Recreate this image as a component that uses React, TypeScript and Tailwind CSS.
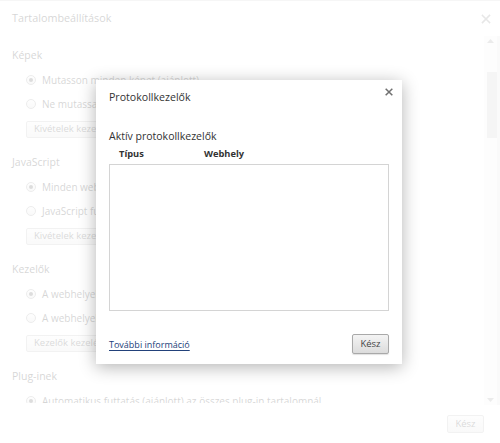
import React from "react";

const font = { fontFamily: '"Open Sans", "Noto Sans", sans-serif' };

function Radio({ checked }: { checked?: boolean }) {
  return (
    <span className="w-[10px] h-[10px] rounded-full border border-[#a0a0a0] bg-gradient-to-b from-[#fafafa] to-[#e2e2e2] flex items-center justify-center shrink-0">
      {checked && <span className="w-[4px] h-[4px] rounded-full bg-[#555]" />}
    </span>
  );
}

function RadioRow({ label, checked }: { label: string; checked?: boolean }) {
  return (
    <div className="h-[24px] flex items-center pl-[14px] gap-[6px] whitespace-nowrap">
      <Radio checked={checked} />
      <span className="text-[10px] text-[#333]">{label}</span>
    </div>
  );
}

function BgButton({ label }: { label: string }) {
  return (
    <div className="ml-[14px] mt-[5px] h-[17px] w-fit px-[7px] flex items-center border border-[#c0c0c0] rounded-[2px] bg-gradient-to-b from-[#f8f8f8] to-[#e4e4e4] text-[9.5px] text-[#444] whitespace-nowrap">
      {label}
    </div>
  );
}

function Section({
  title,
  r1,
  r2,
  btn,
}: {
  title: string;
  r1: string;
  r2: string;
  btn: string;
}) {
  return (
    <div className="mb-[15px]">
      <div className="h-[20px] flex items-center text-[10.5px] text-[#333]">{title}</div>
      <div className="mt-[2px]">
        <RadioRow label={r1} checked />
        <RadioRow label={r2} />
      </div>
      <BgButton label={btn} />
    </div>
  );
}

function XIcon({ size, color, w }: { size: number; color: string; w: number }) {
  return (
    <svg width={size} height={size} viewBox="0 0 10 10">
      <path d="M1.5 1.5 L8.5 8.5 M8.5 1.5 L1.5 8.5" stroke={color} strokeWidth={w} strokeLinecap="square" />
    </svg>
  );
}

export default function App() {
  return (
    <div className="w-[500px] h-[443px] relative overflow-hidden bg-white" style={font}>
      {/* background settings window */}
      <div className="w-full h-full flex flex-col border-t border-[#d0d0d0]">
        <div className="h-[35px] flex items-center justify-between pl-[12px] pr-[9px] shrink-0">
          <span className="text-[10.8px] text-[#333]">Tartalombeállítások</span>
          <XIcon size={10} color="#888" w={1.6} />
        </div>
        <div className="flex flex-row h-[369px] shrink-0">
          <div className="flex-1 flex flex-col">
            <div className="h-[367px] overflow-hidden pl-[12px] pt-[10px]">
              <Section
                title="Képek"
                r1="Mutasson minden képet (ajánlott)"
                r2="Ne mutassa a képeket"
                btn="Kivételek kezelése..."
              />
              <Section
                title="JavaScript"
                r1="Minden webhelyen engedélyezze a JavaScript futtatását (ajánlott)"
                r2="JavaScript futtatásának tiltása minden webhelyen"
                btn="Kivételek kezelése..."
              />
              <Section
                title="Kezelők"
                r1="A webhelyek kérhetik, hogy protokollok alapértelmezett kezelői legyenek"
                r2="A webhelyek nem kezelhetik a protokollokat"
                btn="Kezelők kezelése..."
              />
              <div className="h-[20px] flex items-center text-[10.5px] text-[#333]">Plug-inek</div>
              <div className="mt-[2px]">
                <RadioRow label="Automatikus futtatás (ajánlott) az összes plug-in tartalomnál" checked />
              </div>
            </div>
          </div>
          <div className="w-[13px] flex flex-col items-center bg-[#f4f4f4] shrink-0">
            <div className="h-[10px] flex items-center justify-center">
              <svg width="7" height="4" viewBox="0 0 7 4"><path d="M0 4 L3.5 0 L7 4 Z" fill="#9a9a9a" /></svg>
            </div>
            <div className="mt-[26px] w-[10px] h-[66px] bg-[#cfcfcf] ml-[3px]" />
            <div className="flex-1" />
            <div className="h-[10px] flex items-center justify-center">
              <svg width="7" height="4" viewBox="0 0 7 4"><path d="M0 0 L3.5 4 L7 0 Z" fill="#9a9a9a" /></svg>
            </div>
          </div>
          <div className="w-[3px] bg-[#e6e6e6] shrink-0" />
        </div>
        <div className="flex-1 flex items-start justify-end pr-[16px] pt-[10px]">
          <div className="h-[18px] w-[37px] flex items-center justify-center border border-[#bdbdbd] rounded-[2px] bg-gradient-to-b from-[#f6f6f6] to-[#e2e2e2] text-[9.5px] text-[#444]">
            Kész
          </div>
        </div>
      </div>

      {/* white veil */}
      <div className="absolute inset-0 bg-white/[0.8]" />

      {/* modal */}
      <div className="absolute left-[96px] top-[80px] w-[306px] h-[284px] bg-white shadow-[0_3px_16px_rgba(0,0,0,0.3)] flex flex-col">
        <div className="h-[34px] flex items-start justify-between pl-[13px] pr-[8px] pt-[9px]">
          <span className="text-[10.6px] text-[#333] leading-[17px]">Protokollkezelők</span>
          <span className="mt-[-1px] mr-[1px]">
            <XIcon size={8} color="#707070" w={1.9} />
          </span>
        </div>
        <div className="pl-[13px] mt-[14px] h-[17px] flex items-center text-[10.5px] text-[#333]">
          Aktív protokollkezelők
        </div>
        <div className="flex items-center h-[20px] mt-[-1px] text-[9.3px] font-bold text-[#333]">
          <span className="pl-[23px] w-[108px]">Típus</span>
          <span>Webhely</span>
        </div>
        <div className="ml-[13px] w-[280px] h-[147px] border border-[#d4d4d4] bg-white" />
        <div className="flex items-center justify-between pl-[13px] pr-[13px] mt-[23px]">
          <span className="text-[9px] text-[#22417a] underline underline-offset-2 decoration-[#22417a] mt-[2px]">
            További információ
          </span>
          <div className="h-[20px] w-[37px] flex items-center justify-center border border-[#a9a9a9] rounded-[2px] bg-gradient-to-b from-[#f4f4f4] to-[#dcdcdc] shadow-[0_1px_1px_rgba(0,0,0,0.12)] text-[9.5px] text-[#444]">
            Kész
          </div>
        </div>
      </div>
    </div>
  );
}
